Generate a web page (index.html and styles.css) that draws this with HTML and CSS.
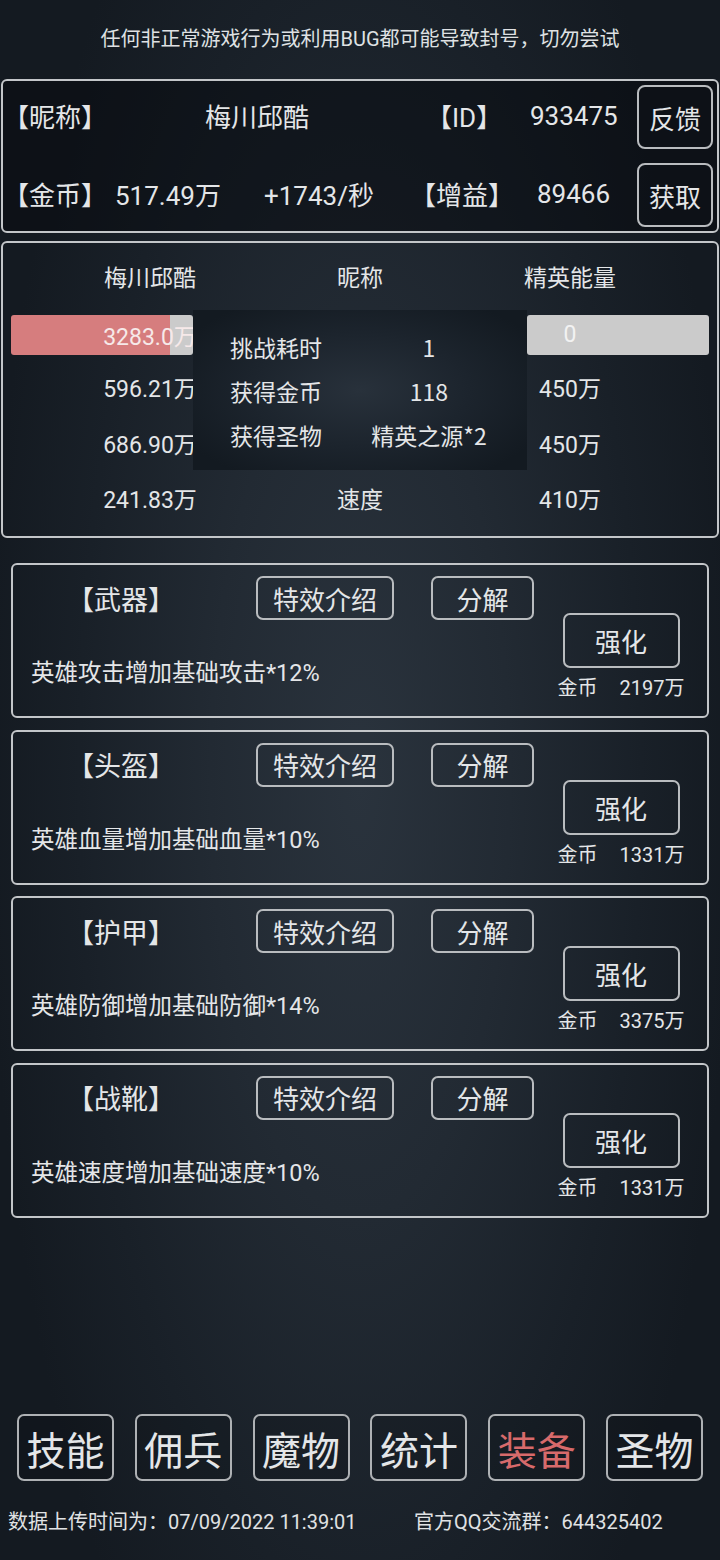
FILE: index.html
```html
<!DOCTYPE html>
<html lang="zh-CN">
<head>
<meta charset="utf-8">
<title>装备</title>
<link rel="stylesheet" href="styles.css">
</head>
<body>
<div class="page">
  <p class="notice">任何非正常游戏行为或利用BUG都可能导致封号，切勿尝试</p>

  <section class="info">
    <div class="info-row">
      <span class="lbl">【昵称】</span>
      <span class="nick">梅川邱酷</span>
      <span class="lbl id-lbl">【ID】</span>
      <span class="idv">933475</span>
      <div class="btn sq">反馈</div>
    </div>
    <div class="info-row">
      <span class="lbl">【金币】</span>
      <span class="gold">517.49万</span>
      <span class="rate">+1743/秒</span>
      <span class="lbl buff-lbl">【增益】</span>
      <span class="buff">89466</span>
      <div class="btn sq">获取</div>
    </div>
  </section>

  <section class="stats">
    <div class="stat-row">
      <span>梅川邱酷</span><span>昵称</span><span>精英能量</span>
    </div>
    <div class="bars">
      <div class="bar bar-left" style="--fill: 87.4%"><span>3283.0万</span></div>
      <div class="bar bar-mid"></div>
      <div class="bar bar-right"><span>0</span></div>
    </div>
    <div class="stat-row">
      <span>596.21万</span><span></span><span>450万</span>
    </div>
    <div class="stat-row">
      <span>686.90万</span><span></span><span>450万</span>
    </div>
    <div class="stat-row">
      <span>241.83万</span><span>速度</span><span>410万</span>
    </div>

    <div class="popup">
      <span>挑战耗时</span><span>1</span>
      <span>获得金币</span><span>118</span>
      <span>获得圣物</span><span>精英之源*2</span>
    </div>
  </section>

  <section class="cards">
    <div class="card">
      <div class="card-main">
        <div class="card-top">
          <span class="slot">【武器】</span>
          <div class="btn fx">特效介绍</div>
          <div class="btn dec">分解</div>
        </div>
        <p class="desc">英雄攻击增加基础攻击*12%</p>
      </div>
      <div class="card-side">
        <div class="btn up">强化</div>
        <div class="price"><span>金币</span><span>2197万</span></div>
      </div>
    </div>
    <div class="card">
      <div class="card-main">
        <div class="card-top">
          <span class="slot">【头盔】</span>
          <div class="btn fx">特效介绍</div>
          <div class="btn dec">分解</div>
        </div>
        <p class="desc">英雄血量增加基础血量*10%</p>
      </div>
      <div class="card-side">
        <div class="btn up">强化</div>
        <div class="price"><span>金币</span><span>1331万</span></div>
      </div>
    </div>
    <div class="card">
      <div class="card-main">
        <div class="card-top">
          <span class="slot">【护甲】</span>
          <div class="btn fx">特效介绍</div>
          <div class="btn dec">分解</div>
        </div>
        <p class="desc">英雄防御增加基础防御*14%</p>
      </div>
      <div class="card-side">
        <div class="btn up">强化</div>
        <div class="price"><span>金币</span><span>3375万</span></div>
      </div>
    </div>
    <div class="card">
      <div class="card-main">
        <div class="card-top">
          <span class="slot">【战靴】</span>
          <div class="btn fx">特效介绍</div>
          <div class="btn dec">分解</div>
        </div>
        <p class="desc">英雄速度增加基础速度*10%</p>
      </div>
      <div class="card-side">
        <div class="btn up">强化</div>
        <div class="price"><span>金币</span><span>1331万</span></div>
      </div>
    </div>
  </section>

  <nav class="nav">
    <div class="btn tab">技能</div>
    <div class="btn tab">佣兵</div>
    <div class="btn tab">魔物</div>
    <div class="btn tab">统计</div>
    <div class="btn tab active">装备</div>
    <div class="btn tab">圣物</div>
  </nav>

  <footer class="footer">
    <span class="upload">数据上传时间为：07/09/2022 11:39:01</span>
    <span>官方QQ交流群：644325402</span>
  </footer>
</div>
</body>
</html>
```

FILE: styles.css
```css
* {
  box-sizing: border-box;
}

html, body {
  margin: 0;
  padding: 0;
}

body {
  width: 720px;
  height: 1560px;
  overflow: hidden;
  font-family: Roboto, "Noto Sans CJK SC", sans-serif;
  color: #e4e6e8;
  background: radial-gradient(ellipse 52% 70% at 50% 50%, #2a333d 0%, #222a33 40%, #192028 75%, #141a21 100%);
}

.page {
  height: 1560px;
  display: flex;
  flex-direction: column;
}

.notice {
  margin: 0;
  padding-top: 24px;
  height: 54px;
  line-height: 30px;
  font-size: 20px;
  text-align: center;
  color: #dfe1e3;
}

/* ---------- generic button ---------- */
.btn {
  display: flex;
  align-items: center;
  justify-content: center;
  border: 2px solid #b9bcbf;
  border-radius: 7px;
  white-space: nowrap;
}

/* ---------- info box ---------- */
.info {
  margin: 25px 1px 0;
  border: 2px solid #c3c6c9;
  border-radius: 6px;
  padding: 4px 4px 4px 0;
  background: rgba(4, 7, 11, 0.45);
  display: flex;
  flex-direction: column;
  gap: 14px;
  font-size: 26px;
}

.info-row {
  display: flex;
  align-items: center;
  height: 64px;
  padding-bottom: 3px;
  white-space: nowrap;
}

.lbl {
  width: 104px;
  flex: none;
}

.nick {
  width: 300px;
  text-align: center;
}

.id-lbl {
  width: 76px;
  margin-left: 19px;
}

.idv {
  margin-left: 28px;
}

.gold {
  width: 149px;
  margin-left: 8px;
}

.rate {
  width: 146px;
}

.buff {
  margin-left: 23px;
}

.btn.sq {
  margin-left: auto;
  width: 76px;
  height: 64px;
  margin-bottom: -3px;
  font-size: 26px;
  border-radius: 8px;
}

/* ---------- stats box ---------- */
.stats {
  position: relative;
  margin: 8px 1px 0;
  border: 2px solid #c3c6c9;
  border-radius: 6px;
  padding: 16px 0 15px;
  display: flex;
  flex-direction: column;
  gap: 15.5px;
  font-size: 23px;
}

.stat-row {
  display: grid;
  grid-template-columns: repeat(3, 210px);
  padding-left: 42px;
  height: 40px;
  line-height: 40px;
  text-align: center;
  white-space: nowrap;
}

.bars {
  display: flex;
  justify-content: space-between;
  padding: 0 8px;
}

.bar {
  width: 182px;
  height: 40px;
  border-radius: 3px;
  background: #cbcbcb;
  display: flex;
  align-items: center;
  justify-content: center;
  white-space: nowrap;
  color: #f2f2f2;
}

.bar-left {
  padding-left: 96px;
  background: linear-gradient(90deg, #d67d7e var(--fill), #cbcbcb var(--fill));
  color: #f6e9e9;
}

.bar-right {
  padding-right: 96px;
}

.popup {
  position: absolute;
  left: 190px;
  top: 67px;
  width: 334px;
  height: 160px;
  padding-top: 15px;
  display: grid;
  grid-template-columns: 166px 140px;
  grid-auto-rows: 44px;
  align-items: center;
  text-align: center;
  font-family: "Noto Sans CJK SC", sans-serif;
  font-size: 23px;
  white-space: nowrap;
  background: radial-gradient(ellipse 60% 65% at 50% 50%, #28313b 0%, #1c242d 55%, #131a21 100%);
}

/* ---------- equipment cards ---------- */
.cards {
  margin-top: 25px;
  padding: 0 11px;
  display: flex;
  flex-direction: column;
  gap: 11.67px;
}

.card {
  height: 155px;
  border: 2px solid #c3c6c9;
  border-radius: 6px;
  display: flex;
}

.card-main {
  padding-top: 11px;
}

.card-top {
  display: flex;
  align-items: center;
  height: 44px;
  padding-left: 54px;
  font-size: 26px;
}

.slot {
  width: 104px;
  font-size: 27px;
  white-space: nowrap;
}

.btn.fx {
  margin-left: 85px;
  width: 138px;
  height: 44px;
}

.btn.dec {
  margin-left: 37px;
  width: 103px;
  height: 44px;
}

.desc {
  margin: 37px 0 0;
  padding-left: 18px;
  font-size: 23.5px;
  line-height: 32px;
  white-space: nowrap;
}

.card-side {
  margin-left: 22px;
  width: 130px;
  padding-top: 48px;
  display: flex;
  flex-direction: column;
  align-items: center;
}

.btn.up {
  width: 117px;
  height: 55px;
  font-size: 26px;
}

.price {
  margin-top: 8px;
  display: flex;
  gap: 22px;
  font-size: 20px;
  line-height: 24px;
  white-space: nowrap;
}

/* ---------- bottom nav ---------- */
.nav {
  margin-top: auto;
  padding: 0 17px;
  display: flex;
  justify-content: space-between;
}

.btn.tab {
  width: 97px;
  height: 67px;
  font-size: 39px;
  border-color: #aeb1b4;
  background: rgba(0, 0, 0, 0.12);
}

.btn.tab.active {
  color: #d76a6b;
}

.footer {
  margin-top: 26px;
  margin-bottom: 23px;
  height: 30px;
  line-height: 30px;
  padding-left: 8px;
  display: flex;
  font-size: 20px;
  white-space: nowrap;
  color: #e0e2e4;
}

.upload {
  width: 406px;
}
```
